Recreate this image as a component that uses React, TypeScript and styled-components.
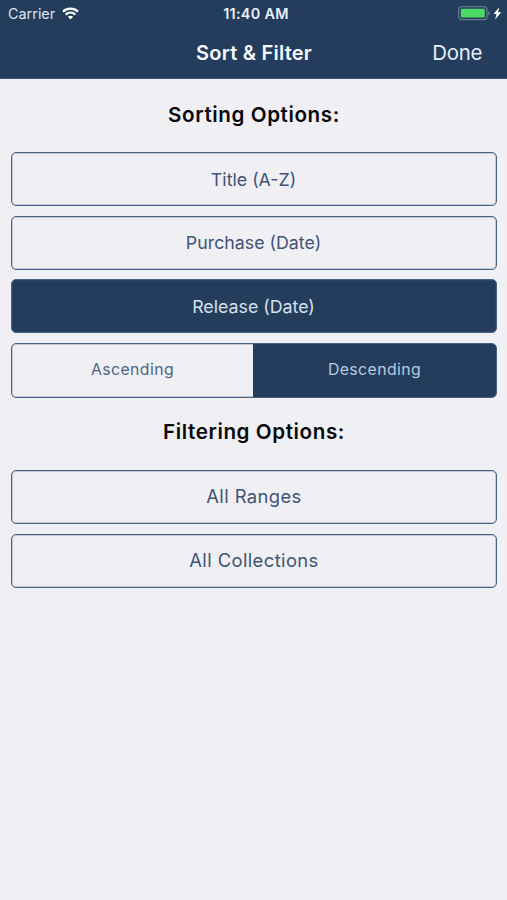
import React from "react";
import styled, { createGlobalStyle } from "styled-components";

const NAVY = "#243d5c";
const PAPER = "#efeff4";

const GlobalStyle = createGlobalStyle`
  * { box-sizing: border-box; }
  html, body { margin: 0; background: ${PAPER}; }
  body { font-family: Inter, "Liberation Sans", sans-serif; }
`;

const Screen = styled.div`
  width: 100%;
  height: 900px;
  background: ${PAPER};
`;

const Header = styled.header`
  height: 79px;
  background: ${NAVY};
  border-bottom: 1px solid #405873;
  color: #fff;
`;

const StatusBar = styled.div`
  display: grid;
  grid-template-columns: 1fr auto 1fr;
  align-items: center;
  height: 27px;
  padding: 0 5px 0 8px;
`;

const Carrier = styled.div`
  display: flex;
  align-items: center;
  gap: 7px;
  font-size: 14.4px;
  line-height: 27px;
  color: #dbe5f1;
`;

const Clock = styled.div`
  padding-left: 2px;
  font-size: 14.4px;
  font-weight: 600;
  line-height: 27px;
  letter-spacing: 0.3px;
  color: #e9f1fa;
`;

const Battery = styled.div`
  display: flex;
  justify-content: flex-end;
`;

const NavBar = styled.div`
  display: grid;
  grid-template-columns: 1fr auto 1fr;
  align-items: center;
  height: 51px;
  padding: 0 25px 0 26px;
`;

const NavTitle = styled.h1`
  grid-column: 2;
  margin: 0;
  font-size: 20px;
  font-weight: 600;
  letter-spacing: 0.22px;
  color: #f6faff;
`;

const DoneButton = styled.button`
  justify-self: end;
  padding: 0;
  border: 0;
  background: none;
  color: #e6eff9;
  font: 400 20.4px Inter, sans-serif;
  letter-spacing: -0.3px;
`;

const Content = styled.main`
  padding: 0 10px 0 11px;
`;

const Heading = styled.h2`
  margin: 0;
  height: 73.3px;
  padding-top: 21.6px;
  font-size: 20.6px;
  line-height: 28px;
  font-weight: 600;
  letter-spacing: 0.6px;
  text-align: center;
  color: #08080a;
`;

const Options = styled.div`
  display: flex;
  flex-direction: column;
  gap: 9.5px;
`;

const Option = styled.button<{ $active?: boolean; $wide?: boolean }>`
  height: 54px;
  padding: ${(p) => (p.$wide ? "0 0 2px" : "0 1px 0 0")};
  border: 1px solid #4a6281;
  border-radius: 5px;
  box-shadow: inset 0 0 0 1px rgba(63, 88, 122, 0.25);
  background: ${(p) => (p.$active ? NAVY : "transparent")};
  color: ${(p) => (p.$active ? "#d5e0ee" : "#405474")};
  font: 400 ${(p) => (p.$wide ? 18.4 : 17.8)}px Inter, sans-serif;
  letter-spacing: ${(p) => (p.$wide ? 0.4 : 0)}px;
`;

const Segmented = styled.div`
  display: grid;
  grid-template-columns: 241px 1fr;
  height: 55px;
  margin-bottom: -1px;
  border: 1px solid #4a6281;
  border-radius: 5px;
  box-shadow: inset 0 0 0 1px rgba(63, 88, 122, 0.25);
  overflow: hidden;
`;

const Segment = styled.button<{ $active?: boolean }>`
  padding: 0 0 2px;
  border: 0;
  background: ${(p) => (p.$active ? NAVY : "transparent")};
  color: ${(p) => (p.$active ? "#b9cbe3" : "#4f6484")};
  font: 400 15.8px Inter, sans-serif;
  letter-spacing: 0.42px;
`;

const WifiIcon = () => (
  <svg width="17" height="13" viewBox="0 0 17 13" fill="none" stroke="#fff" strokeWidth="2.3">
    <path d="M1 4.7C5.2 .7 11.8 .7 16 4.7" />
    <path d="M3.7 7.6C6.5 5 10.5 5 13.3 7.6" />
    <path d="M8.5 12.4L5.9 9.8C7.4 8.5 9.6 8.5 11.1 9.8Z" fill="#fff" stroke="none" />
  </svg>
);

const BatteryIcon = () => (
  <svg width="44" height="15" viewBox="0 0 44 15">
    <rect x=".7" y=".7" width="28.2" height="13" rx="3" fill="none" stroke="#64798c" strokeWidth="1.3" />
    <rect x="2.8" y="2.8" width="24" height="8.8" rx="1" fill="#4cd964" />
    <path d="M30.3 4.8Q32 5.5 32 7.2T30.3 9.6Z" fill="#64798c" />
    <path d="M41.2 1.3L35.5 8h3l-1.4 5.4L43.3 6.2h-3.2Z" fill="#fff" />
  </svg>
);

export default function App() {
  return (
    <Screen>
      <GlobalStyle />
      <Header>
        <StatusBar>
          <Carrier>
            Carrier
            <WifiIcon />
          </Carrier>
          <Clock>11:40 AM</Clock>
          <Battery>
            <BatteryIcon />
          </Battery>
        </StatusBar>
        <NavBar>
          <NavTitle>Sort &amp; Filter</NavTitle>
          <DoneButton>Done</DoneButton>
        </NavBar>
      </Header>
      <Content>
        <Heading>Sorting Options:</Heading>
        <Options>
          <Option>Title (A-Z)</Option>
          <Option>Purchase (Date)</Option>
          <Option $active>Release (Date)</Option>
          <Segmented>
            <Segment>Ascending</Segment>
            <Segment $active>Descending</Segment>
          </Segmented>
        </Options>
        <Heading>Filtering Options:</Heading>
        <Options>
          <Option $wide>All Ranges</Option>
          <Option $wide>All Collections</Option>
        </Options>
      </Content>
    </Screen>
  );
}
